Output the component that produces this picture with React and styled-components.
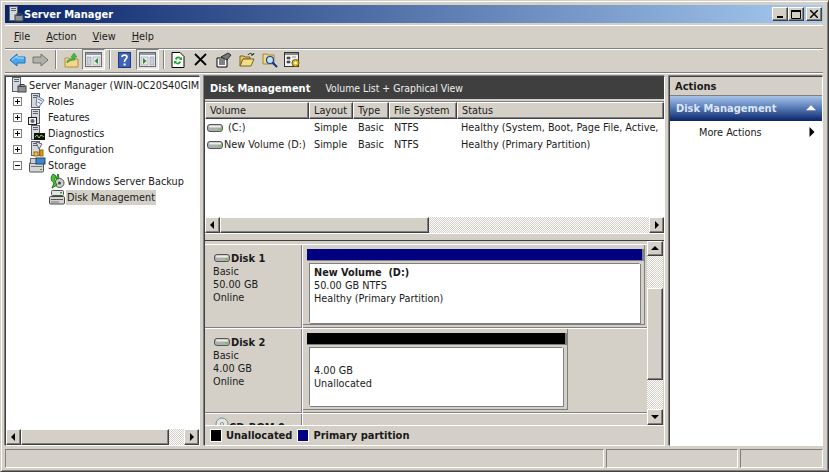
import React from "react";
import styled, { createGlobalStyle, css } from "styled-components";

const Global = createGlobalStyle`
  html, body { margin: 0; padding: 0; background: #d4d0c8; }
  body { width: 829px; height: 472px; overflow: hidden; }
  * { box-sizing: border-box; }
`;
const FONT = `"DejaVu Sans Condensed", "DejaVu Sans", sans-serif`;
const raised = css`
  background: #d4d0c8;
  border: 1px solid;
  border-color: #fff #404040 #404040 #fff;
  box-shadow: inset -1px -1px 0 #808080;
`;
const dither = css`
  background-color: #fff;
  background-image: conic-gradient(#d4d0c8 25%, #fff 0 50%, #d4d0c8 0 75%, #fff 0);
  background-size: 2px 2px;
`;
const Window = styled.div`
  width: 829px; height: 472px; padding: 4px 5px 3px 4px; display: flex; flex-direction: column;
  background: #d4d0c8; font: 10.8px ${FONT}; color: #1a1a1a;
  border: 1px solid; border-color: #d4d0c8 #404040 #404040 #d4d0c8;
  box-shadow: inset 1px 1px 0 #fff, inset -1px -1px 0 #808080;
`;
const TitleBar = styled.div`
  height: 18px; flex: none; display: flex; align-items: center; padding: 0 1px 0 1px;
  background: linear-gradient(90deg, #0a246a 0%, #a6caf0 100%);
  color: #fff; font-weight: 700; font-size: 11px;
`;
const TitleText = styled.span` flex: 1; margin-left: 0; `;
const CaptionBtn = styled.button`
  ${raised}; width: 16px; height: 14px; padding: 0; display: flex; align-items: center; justify-content: center; color: #000;
  margin-left: ${p => p.$gap}px;
`;
const MenuBar = styled.div`
  height: 24px; flex: none; margin-top: 2px; display: flex; align-items: center; padding: 0 0 2px 9px; gap: 16px;
  border-top: 1px solid #fff; border-bottom: 1px solid #808080;
  box-shadow: 0 1px 0 #fff;
`;
const U = styled.span` text-decoration: underline; `;
const ToolBar = styled.div`
  height: 23px; flex: none; margin-top: 1px; display: flex; align-items: center; padding: 0 0 3px 1px;
  border-bottom: 1px solid #808080;
  box-shadow: 0 1px 0 #fff;
`;
const ToolIcon = styled.span` display: flex; width: ${p => p.$w || 23}px; justify-content: center; `;
const ToolToggle = styled.span`
  display: flex; width: 23px; height: 21px; flex: none; align-items: center; justify-content: center;
  border: 1px solid; border-color: #808080 #fff #fff #808080; background: #e9e7e2;
`;
const ToolSep = styled.span`
  width: 2px; height: 19px; margin: 0 ${p => p.$r}px 0 ${p => p.$l}px;
  border-left: 1px solid #808080; border-right: 1px solid #fff;
`;
const Body = styled.div`
  flex: 1; min-height: 0; margin-top: 3px; display: flex; gap: 4px;
`;
const Sunken = styled.div`
  border: 1px solid; border-color: #404040 #fff #fff #404040;
  box-shadow: 1px 1px 0 #d4d0c8, -1px -1px 0 #808080;
`;
const TreePane = styled(Sunken)`
  width: 195px; background: #fff; display: flex; flex-direction: column; min-height: 0;
`;
const TreeList = styled.div` flex: 1; overflow: hidden; `;
const Row = styled.div`
  height: 16px; display: flex; align-items: center; white-space: nowrap; overflow: hidden;
  padding-left: ${p => p.$pad}px;
`;
const Expander = styled.span`
  width: 9px; height: 9px; flex: none; border: 1px solid #808080; position: relative; margin-right: 6px; background: #fff;
  &::before { content: ""; position: absolute; left: 1px; top: 3px; width: 5px; height: 1px; background: #000; }
  ${p => p.$plus && css`&::after { content: ""; position: absolute; left: 3px; top: 1px; width: 1px; height: 5px; background: #000; }`}
`;
const TreeLabel = styled.span`
  margin-left: 1px; padding: 0 1px; height: 15px; line-height: 15px;
  ${p => p.$selected && css`background: #d4d0c8;`}
`;
const HScroll = styled.div` height: 16px; flex: none; display: flex; ${dither}; `;
const ScrollBtn = styled.span`
  ${raised}; flex: none; width: ${p => p.$w || 15}px; height: ${p => p.$h || 16}px; display: flex; align-items: center; justify-content: center;
`;
const HThumb = styled.span` ${raised}; height: 16px; width: ${p => p.$w}px; flex: none; `;
const Spacer = styled.span` flex: 1; `;
const Center = styled(Sunken)`
  width: 461px; display: flex; flex-direction: column; min-height: 0; background: #d4d0c8;
`;
const DarkHead = styled.div`
  height: 22px; flex: none; background: #3f3f3f; color: #fff; display: flex; align-items: center; padding-left: 5px; gap: 15px;
`;
const DarkTitle = styled.b` font-size: 11px; `;
const DarkSub = styled.span` color: #f0f0f0; font-size: 10.4px; `;
const ListArea = styled.div`
  height: 132px; flex: none; margin-top: 2px; background: #fff; border-top: 1px solid #808080; display: flex; flex-direction: column;
`;
const Columns = styled.div` display: grid; grid-template-columns: 104px 44px 36px 68px 1fr; height: 17px; flex: none; `;
const ColHead = styled.span`
  ${raised}; padding-left: 4px; line-height: 15px; white-space: nowrap; overflow: hidden;
`;
const ListRows = styled.div` flex: 1; `;
const ListRow = styled.div`
  display: grid; grid-template-columns: 104px 44px 36px 68px 1fr; height: 17px; align-items: center; white-space: nowrap;
`;
const Cell = styled.span` padding-left: 5px; overflow: hidden; `;
const StatusText = styled.span` padding-left: 4px; overflow: hidden; `;
const VolCell = styled.span` padding-left: 2px; display: flex; align-items: center; `;
const VolName = styled.span` margin-left: ${p => p.$gap}px; `;
const Splitter = styled.div`
  height: 8px; flex: none; border-top: 1px solid #fff; border-bottom: 1px solid #404040;
`;
const Graph = styled.div` flex: 1; min-height: 0; display: flex; flex-direction: column; `;
const GraphMain = styled.div` flex: 1; min-height: 0; display: flex; `;
const DiskList = styled.div` flex: 1; min-width: 0; overflow: hidden; padding-top: 3px; `;
const DiskRow = styled.div`
  height: ${p => p.$h}px; display: flex; border-bottom: 1px solid #fff; box-shadow: inset 0 -1px 0 #808080;
  &:first-child { border-top: 1px solid #fff; }
`;
const DiskInfo = styled.div`
  width: 98px; flex: none; padding: 6px 0 0 8px; line-height: 13px; box-shadow: inset -1px 0 0 #808080; border-right: 1px solid #fff;
`;
const DiskName = styled.div` font-weight: 700; font-size: 11px; display: flex; align-items: center; height: 14px; margin-left: 1px; `;
const Partition = styled.div`
  width: ${p => p.$w}px; border-right: 1px solid #808080; border-bottom: 1px solid #808080; padding: 4px 0 0 3px; height: ${p => p.$ph}px;
`;
const Bar = styled.div` height: 12px; background: ${p => p.$c}; margin-left: 1px; box-shadow: inset -2px -1px 0 #808080; `;
const PartBox = styled.div`
  height: ${p => p.$h}px; margin: 2px 4px 0 3px; background: #fff; padding: 2px 0 0 4px; line-height: 13px;
  border: 1px solid; border-color: #808080 #fff #fff #808080;
  box-shadow: 1px 1px 0 #808080;
`;
const PartName = styled.div` font-weight: 700; `;
const BlankLine = styled.div` height: 14px; `;
const VScroll = styled.div`
  width: 16px; flex: none; margin-right: 1px; display: flex; flex-direction: column; ${dither};
`;
const VThumb = styled.span` ${raised}; width: 16px; height: ${p => p.$h}px; flex: none; margin-top: ${p => p.$t}px; `;
const Legend = styled.div`
  height: 20px; flex: none; display: flex; align-items: center; padding-left: 5px; font-weight: 700; font-size: 11px;
  border-top: 1px solid #fff;
`;
const Swatch = styled.span`
  width: 12px; height: 13px; flex: none; background: ${p => p.$c}; border: 1px solid #fff; margin-right: 4px;
`;
const LegendText = styled.span` margin-right: 5px; `;
const ActionsPane = styled(Sunken)`
  width: 154px; display: flex; flex-direction: column; background: #fff;
`;
const ActionsHead = styled.div`
  height: 19px; flex: none; background: #d4d0c8; font-weight: 700; padding-left: 5px; line-height: 19px; border-bottom: 1px solid #808080; font-size: 11px;
`;
const ActionsGroup = styled.div`
  height: 25px; flex: none; display: flex; align-items: center; justify-content: space-between; padding: 0 6px; color: #dde6f5; font-weight: 700; font-size: 11px;
  background: linear-gradient(180deg, #a8c4ea 0%, #5b7fbb 45%, #0a246a 100%);
`;
const ActionItem = styled.div`
  height: 22px; display: flex; align-items: center; justify-content: space-between; padding: 0 5px 0 29px;
`;
const StatusBar = styled.div`
  height: 19px; flex: none; margin-top: 3px; display: grid; grid-template-columns: 1fr 132px 83px; gap: 2px;
`;
const StatusCell = styled.span` border: 1px solid; border-color: #808080 #fff #fff #808080; `;

const Tower = ({ children }) => (
  <svg width="18" height="16" viewBox="0 0 18 16" style={{ flex: "none" }}>
    <rect x="3.5" y="0.5" width="8" height="14" fill="#d6d9dc" stroke="#5a6270" />
    <rect x="5" y="2" width="5" height="1" fill="#5a6270" />
    <rect x="5" y="4" width="5" height="1" fill="#5a6270" />
    {children}
  </svg>
);
const RootIcon = () => (
  <Tower>
    <rect x="9" y="9" width="8" height="6" fill="#8d9198" stroke="#3e434a" />
    <rect x="11" y="7.5" width="4" height="2" fill="none" stroke="#3e434a" />
  </Tower>
);
const RolesIcon = () => (
  <Tower>
    <path d="M9 3 L16 7 L11 14 L8 12 Z" fill="#eef1f8" stroke="#6c7ca0" />
    <path d="M10 6l4 2M9.5 9l3 1.5" stroke="#6c7ca0" />
  </Tower>
);
const FeaturesIcon = () => (
  <Tower>
    <rect x="0.5" y="8.5" width="8" height="7" fill="#eee" stroke="#222" />
    <circle cx="4.5" cy="12" r="2" fill="#666" />
  </Tower>
);
const DiagIcon = () => (
  <Tower>
    <rect x="6" y="8" width="11" height="7" fill="#111" />
    <path d="M7 12l2-2 2 3 2-3 3 2" stroke="#8fd04a" fill="none" />
  </Tower>
);
const ConfigIcon = () => (
  <Tower>
    <path d="M8 1 L14 3 L11 8Z" fill="#dfe4ec" stroke="#667" />
    <rect x="12" y="9" width="3" height="6" fill="#e0a020" stroke="#a06a00" />
    <rect x="6" y="11" width="4" height="4" fill="#e8c050" stroke="#a06a00" />
  </Tower>
);
const StorageIcon = () => (
  <svg width="18" height="16" viewBox="0 0 18 16" style={{ flex: "none" }}>
    <rect x="1.5" y="5.5" width="14" height="9.5" rx="1" fill="#d4d6d6" stroke="#555" />
    <rect x="3" y="9" width="11" height="1" fill="#777" />
    <rect x="12" y="12" width="2" height="1" fill="#3a3" />
    <rect x="2.5" y="1.5" width="13" height="5" fill="#c8d0d8" stroke="#667" />
    <rect x="8" y="1" width="9" height="6" fill="#3f86d0" stroke="#246" />
  </svg>
);
const BackupIcon = () => (
  <svg width="16" height="16" viewBox="0 0 16 16" style={{ flex: "none" }}>
    <circle cx="10.5" cy="10" r="4.5" fill="#cfcfcf" stroke="#555" />
    <circle cx="10.5" cy="10" r="1.5" fill="#444" />
    <path d="M4 1 C1 5 2 8 5 10 L3 15 L8 12 C6 9 5 6 7 3 Z" fill="#4cc23c" stroke="#1b7a1b" />
    <path d="M9 1l1 4-3 1z" fill="#4cc23c" stroke="#1b7a1b" />
  </svg>
);
const DiskMgmtIcon = () => (
  <svg width="16" height="16" viewBox="0 0 16 16" style={{ flex: "none" }}>
    <rect x="2.5" y="1.5" width="12" height="5" rx="1" fill="#e3e3e3" stroke="#555" />
    <rect x="11" y="3" width="2" height="1.5" fill="#3a3" />
    <rect x="0.5" y="7.5" width="15" height="7.5" rx="1" fill="#d4d4d4" stroke="#444" />
    <rect x="2" y="10" width="12" height="1" fill="#555" />
    <rect x="2" y="12.5" width="8" height="1" fill="#777" />
  </svg>
);
const DriveIcon = () => (
  <svg width="17" height="10" viewBox="0 0 17 10" style={{ flex: "none" }}>
    <rect x="0.5" y="1.5" width="15" height="7" rx="2.5" fill="#aeb0ae" stroke="#555" />
    <rect x="2" y="2.5" width="12" height="2" rx="1" fill="#ececec" />
    <rect x="11" y="5" width="3" height="2" fill="#7fc05a" />
  </svg>
);
const CdIcon = () => (
  <svg width="15" height="14" viewBox="0 0 15 14" style={{ flex: "none", marginTop: -6 }}>
    <circle cx="8" cy="7" r="6" fill="#dfe8df" stroke="#889" />
    <circle cx="8" cy="7" r="1.5" fill="#fff" stroke="#889" />
  </svg>
);
const ArrowTri = ({ d, s = 7, c = "#000" }) => {
  const paths = {
    l: "M5 0 L5 8 L1 4 Z", r: "M2 0 L2 8 L6 4 Z",
    u: "M0 5 L8 5 L4 1 Z", d: "M0 2 L8 2 L4 6 Z",
  };
  return <svg width={s + 1} height={s + 1} viewBox="0 0 8 8"><path d={paths[d]} fill={c} /></svg>;
};
const BackIcon = () => (
  <svg width="17" height="14" viewBox="0 0 17 14">
    <path d="M1 7 L8 1 V4 H16 V10 H8 V13 Z" fill="#48a8ec" stroke="#1f70c8" />
    <path d="M3 7 L8 3 V5 H15" fill="none" stroke="#b7e2fb" />
  </svg>
);
const ForwardIcon = () => (
  <svg width="17" height="14" viewBox="0 0 17 14">
    <path d="M16 7 L9 1 V4 H1 V10 H9 V13 Z" fill="#b0b0ac" stroke="#74746e" />
  </svg>
);
const UpIcon = () => (
  <svg width="15" height="16" viewBox="0 0 15 16">
    <path d="M1 6 H5 L6 7 H14 V15 H1 Z" fill="#f3d88c" stroke="#b09040" />
    <path d="M3 9 C5 7 7 7 8 7 V5 L7 5 L10 1 L13 5 H11 V8 C8 8 5 9 3 11 Z" fill="#48b83a" stroke="#2a8a26" strokeWidth=".5" />
  </svg>
);
const PaneIcon = ({ side }) => (
  <svg width="17" height="15" viewBox="0 0 17 15">
    <rect x="0.5" y="0.5" width="16" height="14" fill="#f5f5f5" stroke="#6a6a6a" />
    <rect x="1" y="1" width="15" height="2" fill="#8e9aa8" />
    {side === "l" ? (
      <>
        <rect x="2" y="5" width="4" height="8" fill="#c8d0d8" stroke="#889" strokeWidth=".5" />
        <rect x="8" y="5" width="7" height="8" fill="#e8e8e8" stroke="#889" strokeWidth=".5" />
        <path d="M13 6 V12 L9.5 9 Z" fill="#2a8a46" />
      </>
    ) : (
      <>
        <rect x="2" y="5" width="7" height="8" fill="#e8e8e8" stroke="#889" strokeWidth=".5" />
        <rect x="11" y="5" width="4" height="8" fill="#c8d0d8" stroke="#889" strokeWidth=".5" />
        <path d="M4 6 V12 L7.5 9 Z" fill="#2a8a46" />
      </>
    )}
  </svg>
);
const HelpIcon = () => (
  <svg width="13" height="16" viewBox="0 0 13 16">
    <rect x="0.5" y="0.5" width="12" height="15" fill="#3f62b8" stroke="#1f3a80" />
    <path d="M4 5 C4 2.5 9 2.5 9 5 C9 7 6.5 7 6.5 10" fill="none" stroke="#fff" strokeWidth="1.6" />
    <rect x="5.6" y="11.5" width="2" height="2" fill="#fff" />
  </svg>
);
const RefreshIcon = () => (
  <svg width="14" height="16" viewBox="0 0 14 16">
    <path d="M1 .5 H9 L13 4.5 V15.5 H1 Z" fill="#fff" stroke="#000" />
    <path d="M4 7 C5 4 8 4 10 6 L11 4.5 V8 H8 L9 7 C8 6 6 6 5.5 8 Z" fill="#23a030" />
    <path d="M10 10 C9 13 6 13 4 11 L3 12.5 V9 H6 L5 10 C6 11 8 11 8.5 9 Z" fill="#23a030" />
  </svg>
);
const DeleteIcon = () => (
  <svg width="13" height="13" viewBox="0 0 13 13">
    <path d="M1 1 L12 12 M12 1 L1 12" stroke="#000" strokeWidth="1.8" />
  </svg>
);
const PropsIcon = () => (
  <svg width="16" height="16" viewBox="0 0 16 16">
    <path d="M1 6 H11 V15 H1 Z" fill="#fff" stroke="#000" />
    <path d="M3 8h6M3 10h6M3 12h6" stroke="#000" />
    <path d="M5 5 L12 1 L15 3 L11 8 Z" fill="#777" stroke="#000" strokeWidth=".7" />
  </svg>
);
const OpenIcon = () => (
  <svg width="16" height="14" viewBox="0 0 16 14">
    <path d="M1 3 H5 L6 4 H11 V6 H4 L1 13 Z" fill="#e8c860" stroke="#77651e" />
    <path d="M4 6 H15 L12 13 H1 Z" fill="#f3de88" stroke="#77651e" />
    <path d="M9 2 C10 0 13 0 14 2 M14 2 L15 0 M14 2 L12 2" fill="none" stroke="#222" />
  </svg>
);
const FindIcon = () => (
  <svg width="16" height="16" viewBox="0 0 16 16">
    <path d="M1 2 H5 L6 3 H12 V12 H1 Z" fill="#f0d888" stroke="#a08838" />
    <circle cx="8" cy="8" r="3.5" fill="#bfe4f2" stroke="#23408c" strokeWidth="1.2" />
    <path d="M10.5 10.5 L15 15" stroke="#1b2f80" strokeWidth="2" />
  </svg>
);
const SettingsIcon = () => (
  <svg width="17" height="16" viewBox="0 0 17 16">
    <rect x="0.5" y="0.5" width="14" height="14" fill="#f2f2f2" stroke="#333" />
    <rect x="1" y="1" width="13" height="2" fill="#8a8a8a" />
    <path d="M3 5h3v2H3zM8 5h4M3 9h3v2H3z" fill="#555" stroke="#333" strokeWidth=".5" />
    <circle cx="11.5" cy="11" r="3.5" fill="#e0c020" stroke="#6a5a10" />
    <circle cx="11.5" cy="11" r="1.2" fill="#fff" />
  </svg>
);

const tree = [
  ["Roles", RolesIcon], ["Features", FeaturesIcon], ["Diagnostics", DiagIcon], ["Configuration", ConfigIcon],
];

export default function App() {
  return (
    <Window>
      <Global />
      <TitleBar>
        <RootIcon />
        <TitleText>Server Manager</TitleText>
        <CaptionBtn $gap={0}><svg width="8" height="8" viewBox="0 0 8 8"><rect x="1" y="6" width="6" height="2" fill="#000" /></svg></CaptionBtn>
        <CaptionBtn $gap={0}><svg width="10" height="9" viewBox="0 0 10 9"><path d="M.5 1.5h9v7h-9z" fill="none" stroke="#000" /><rect y="0" width="10" height="2" fill="#000" /></svg></CaptionBtn>
        <CaptionBtn $gap={2}><svg width="8" height="8" viewBox="0 0 8 8"><path d="M0 0 L8 8 M8 0 L0 8" stroke="#000" strokeWidth="1.5" /></svg></CaptionBtn>
      </TitleBar>
      <MenuBar>
        <span><U>F</U>ile</span>
        <span><U>A</U>ction</span>
        <span><U>V</U>iew</span>
        <span><U>H</U>elp</span>
      </MenuBar>
      <ToolBar>
        <ToolIcon><BackIcon /></ToolIcon>
        <ToolIcon><ForwardIcon /></ToolIcon>
        <ToolSep $l={3} $r={3} />
        <ToolIcon $w={22}><UpIcon /></ToolIcon>
        <ToolToggle><PaneIcon side="l" /></ToolToggle>
        <ToolSep $l={4} $r={1} />
        <ToolIcon $w={24}><HelpIcon /></ToolIcon>
        <ToolToggle><PaneIcon side="r" /></ToolToggle>
        <ToolSep $l={4} $r={1} />
        <ToolIcon><RefreshIcon /></ToolIcon>
        <ToolIcon><DeleteIcon /></ToolIcon>
        <ToolIcon><PropsIcon /></ToolIcon>
        <ToolIcon><OpenIcon /></ToolIcon>
        <ToolIcon><FindIcon /></ToolIcon>
        <ToolIcon><SettingsIcon /></ToolIcon>
      </ToolBar>
      <Body>
        <TreePane>
          <TreeList>
            <Row $pad={3}><RootIcon /><TreeLabel>Server Manager (WIN-0C20S40GIM</TreeLabel></Row>
            {tree.map(([label, I]) => (
              <Row $pad={7} key={label}><Expander $plus /><I /><TreeLabel>{label}</TreeLabel></Row>
            ))}
            <Row $pad={7}><Expander /><StorageIcon /><TreeLabel>Storage</TreeLabel></Row>
            <Row $pad={43}><BackupIcon /><TreeLabel>Windows Server Backup</TreeLabel></Row>
            <Row $pad={43}><DiskMgmtIcon /><TreeLabel $selected>Disk Management</TreeLabel></Row>
          </TreeList>
          <HScroll>
            <ScrollBtn><ArrowTri d="l" /></ScrollBtn>
            <HThumb $w={148} />
            <Spacer />
            <ScrollBtn><ArrowTri d="r" /></ScrollBtn>
          </HScroll>
        </TreePane>
        <Center>
          <DarkHead><DarkTitle>Disk Management</DarkTitle><DarkSub>Volume List + Graphical View</DarkSub></DarkHead>
          <ListArea>
            <Columns>
              <ColHead>Volume</ColHead><ColHead>Layout</ColHead><ColHead>Type</ColHead><ColHead>File System</ColHead><ColHead>Status</ColHead>
            </Columns>
            <ListRows>
              <ListRow>
                <VolCell><DriveIcon /><VolName $gap={4}>(C:)</VolName></VolCell>
                <Cell>Simple</Cell><Cell>Basic</Cell><Cell>NTFS</Cell><StatusText>Healthy (System, Boot, Page File, Active,</StatusText>
              </ListRow>
              <ListRow>
                <VolCell><DriveIcon /><VolName $gap={0}>New Volume (D:)</VolName></VolCell>
                <Cell>Simple</Cell><Cell>Basic</Cell><Cell>NTFS</Cell><StatusText>Healthy (Primary Partition)</StatusText>
              </ListRow>
            </ListRows>
            <HScroll>
              <ScrollBtn><ArrowTri d="l" /></ScrollBtn>
              <HThumb $w={209} />
              <Spacer />
              <ScrollBtn><ArrowTri d="r" /></ScrollBtn>
            </HScroll>
          </ListArea>
          <Splitter />
          <Graph>
            <GraphMain>
              <DiskList>
                <DiskRow $h={85}>
                  <DiskInfo>
                    <DiskName><DriveIcon />Disk 1</DiskName>
                    <div>Basic</div><div>50.00 GB</div><div>Online</div>
                  </DiskInfo>
                  <Partition $w={342} $ph={80}>
                    <Bar $c="#000080" />
                    <PartBox $h={60}>
                      <PartName>New Volume&nbsp; (D:)</PartName>
                      <div>50.00 GB NTFS</div>
                      <div>Healthy (Primary Partition)</div>
                    </PartBox>
                  </Partition>
                </DiskRow>
                <DiskRow $h={85}>
                  <DiskInfo>
                    <DiskName><DriveIcon />Disk 2</DiskName>
                    <div>Basic</div><div>4.00 GB</div><div>Online</div>
                  </DiskInfo>
                  <Partition $w={265} $ph={81}>
                    <Bar $c="#000" />
                    <PartBox $h={59}>
                      <BlankLine />
                      <div>4.00 GB</div>
                      <div>Unallocated</div>
                    </PartBox>
                  </Partition>
                </DiskRow>
                <DiskRow $h={20}>
                  <DiskInfo>
                    <DiskName><CdIcon />CD-ROM 0</DiskName>
                  </DiskInfo>
                </DiskRow>
              </DiskList>
              <VScroll>
                <ScrollBtn $h={15} $w={16}><ArrowTri d="u" /></ScrollBtn>
                <VThumb $h={92} $t={32} />
                <Spacer />
                <ScrollBtn $h={16} $w={16}><ArrowTri d="d" /></ScrollBtn>
              </VScroll>
            </GraphMain>
            <Legend>
              <Swatch $c="#000" /><LegendText>Unallocated</LegendText>
              <Swatch $c="#000080" /><LegendText>Primary partition</LegendText>
            </Legend>
          </Graph>
        </Center>
        <ActionsPane>
          <ActionsHead>Actions</ActionsHead>
          <ActionsGroup>Disk Management<ArrowTri d="u" c="#fff" s={9} /></ActionsGroup>
          <ActionItem>More Actions<ArrowTri d="r" s={9} /></ActionItem>
        </ActionsPane>
      </Body>
      <StatusBar><StatusCell /><StatusCell /><StatusCell /></StatusBar>
    </Window>
  );
}
